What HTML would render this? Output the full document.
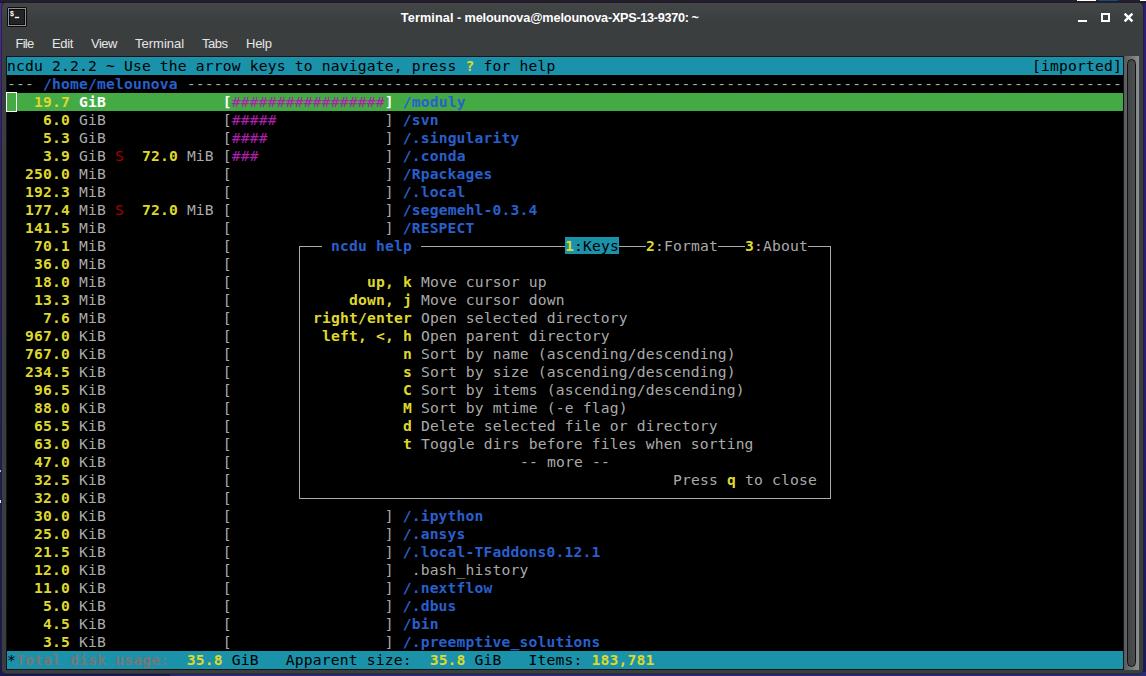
<!DOCTYPE html>
<html lang="en"><head><meta charset="utf-8"><title>Terminal - melounova@melounova-XPS-13-9370: ~</title>
<style>
html,body{margin:0;padding:0}
body{width:1146px;height:676px;overflow:hidden;background:#2d1b74;position:relative;font-family:"Liberation Sans",sans-serif}
#topstrip{position:absolute;left:0;top:0;width:1146px;height:3px;background:linear-gradient(#2a2036,#241d2e 40%,#19191c 80%)}
.ts{position:absolute;top:0;height:1px}
#frame{position:absolute;left:0;top:0;width:1146px;height:676px}
#win{position:absolute;left:2px;top:3px;width:1142px;height:671px}
#tbar{position:absolute;left:0;top:0;width:1141px;height:30px;background:linear-gradient(#444748,#3b3e3f 65%);border-radius:5px 5px 0 0}
#title{position:absolute;left:398.8px;width:400px;top:7px;text-align:left;color:#fff;font-weight:bold;font-size:12.7px;line-height:16px;letter-spacing:-0.15px;white-space:pre}
#icon{position:absolute;left:5px;top:4px;width:20px;height:20px}
.wb{position:absolute}
#menu{position:absolute;left:0;top:30px;height:24px;width:100%;color:#e6e6e6;font-size:13px;line-height:20px}
#menu span{position:absolute;top:1px}
#term{box-shadow:0 0 0 1px #14151c;position:absolute;left:5px;top:54px;width:1116px;height:612px;background:#000;color:#aaa;font-family:"DejaVu Sans Mono","Liberation Mono",monospace;font-size:14.67px;letter-spacing:0.168px;overflow:hidden}
.r{position:absolute;left:0;width:1116px;height:18px;line-height:18px;white-space:pre}
.d{position:absolute;height:18px;line-height:18px;white-space:pre;background:#000}
.hd{background:#1a92aa;color:#000}
.sel{background:#44aa44}
.by{color:#ded82c;font-weight:bold}
.bb{color:#295fcc;font-weight:bold}
.bw{color:#fff;font-weight:bold}
.bk{color:#777;font-weight:bold}
.mg{color:#aa22aa}
.rd{color:#aa0000}
.tab{background:#1a92aa;color:#000}
.tab.by{color:#ded82c}
#cursor{position:absolute;left:4px;top:89px;width:9px;height:18px;border:1px solid #fff}
#dlg{position:absolute;left:288px;top:180px;width:540px;height:270px;background:#000}
#dbox{position:absolute;left:4px;top:9px;width:530px;height:251px;border:1px solid #aaa}
.gap{position:absolute;top:0;height:18px;background:#000}
#sbar{position:absolute;left:1122px;top:53px;width:15px;height:614px;background:linear-gradient(90deg,#585b5c,#8e9192)}
#slider{position:absolute;left:3px;top:3px;width:7px;height:606px;border:1px solid #101111;border-radius:5px;background:linear-gradient(90deg,#434647,#4a4d4e)}
#lstrip{position:absolute;left:0;top:0;width:4px;height:676px;background:linear-gradient(#4b2a9c,#45289a 40px,#2e1c78 160px,#251a6c 60%,#17185a)}
#bstrip{position:absolute;left:0;top:672px;width:1146px;height:4px;background:linear-gradient(90deg,#131a5a 170px,#292a78 170px)}
#rstrip{position:absolute;left:1140px;top:0;width:6px;height:676px;background:linear-gradient(#2f1c78,#2c1b72 50%,#1a195e)}
.spk{position:absolute;left:0;width:1px;background:#e8e8f0}

</style></head><body>
<div id="lstrip"></div><div class="spk" style="top:470px;height:2px;opacity:.75"></div><div class="spk" style="top:500px;height:3px"></div><div id="rstrip"></div><div id="bstrip"></div>
<div id="topstrip"><div class="ts" style="left:1077px;width:19px;background:#fff"></div><div class="ts" style="left:1098px;width:20px;background:#1b4a82"></div><div class="ts" style="left:1140px;width:6px;background:#fff"></div></div>
<svg id="frame" viewBox="0 0 1146 676"><rect x="1.5" y="2.5" width="1142" height="671.5" rx="4.5" fill="#3b3e3f" stroke="#17181a" stroke-opacity="0.55" stroke-width="1"/></svg>
<div id="win">
 <div id="tbar">
  <svg id="icon" viewBox="0 0 20 20"><rect x="0" y="0" width="20" height="20" rx="2" fill="#0b0b0b"/><rect x="1.5" y="1.5" width="17" height="17" fill="#0b0b0b" stroke="#8e8e8e" stroke-width="1"/><rect x="3" y="3" width="14" height="14" fill="#242424"/><text x="2.9" y="9.4" font-family="Liberation Sans, sans-serif" font-weight="bold" font-size="7" fill="#fff">$</text><rect x="7.8" y="9.8" width="4.4" height="1.4" fill="#fff"/></svg>
  <div id="title"><span style="letter-spacing:0.12px">Terminal</span> - melounova@melounova<span style="letter-spacing:-0.3px">-XPS-13-9370</span><span style="letter-spacing:-0.5px">: ~</span></div>
  <svg class="wb" style="left:1076px;top:10px" width="10" height="10" viewBox="0 0 10 10"><rect x="0" y="7" width="9" height="2" fill="#fff"/></svg>
  <svg class="wb" style="left:1099px;top:10px" width="10" height="10" viewBox="0 0 10 10"><rect x="1" y="1" width="7" height="7" fill="none" stroke="#fff" stroke-width="2"/></svg>
  <svg class="wb" style="left:1122px;top:10px" width="10" height="10" viewBox="0 0 10 10"><path d="M0.6 0.6 L8.4 8.4 M8.4 0.6 L0.6 8.4" stroke="#fff" stroke-width="2.4"/></svg>
 </div>
 <div id="menu"><span style="left:13.4px;letter-spacing:-0.7px">File</span><span style="left:50px;letter-spacing:-0.35px">Edit</span><span style="left:89px;letter-spacing:-0.5px">View</span><span style="left:133px">Terminal</span><span style="left:200px;letter-spacing:-0.5px">Tabs</span><span style="left:244px;letter-spacing:-0.25px">Help</span></div>
 <div id="term">
<div class="r hd" style="top:0px">ncdu 2.2.2 ~ Use the arrow keys to navigate, press <span class="by">?</span> for help                                                     [imported]</div>
<div class="r " style="top:18px">--- <span class="bb">/home/melounova</span> --------------------------------------------------------------------------------------------------------</div>
<div class="r sel" style="top:36px">  <span class="by"> 19.7</span> <span class="bw">GiB</span>             <span class="bw">[</span><span class="mg">#################</span><span class="bw">]</span> <span class="bb">/moduly</span></div>
<div class="r " style="top:54px">  <span class="by">  6.0</span> GiB             [<span class="mg">#####</span>            ] <span class="bb">/svn</span></div>
<div class="r " style="top:72px">  <span class="by">  5.3</span> GiB             [<span class="mg">####</span>             ] <span class="bb">/.singularity</span></div>
<div class="r " style="top:90px">  <span class="by">  3.9</span> GiB <span class="rd">S</span> <span class="by"> 72.0</span> MiB [<span class="mg">###</span>              ] <span class="bb">/.conda</span></div>
<div class="r " style="top:108px">  <span class="by">250.0</span> MiB             [                 ] <span class="bb">/Rpackages</span></div>
<div class="r " style="top:126px">  <span class="by">192.3</span> MiB             [                 ] <span class="bb">/.local</span></div>
<div class="r " style="top:144px">  <span class="by">177.4</span> MiB <span class="rd">S</span> <span class="by"> 72.0</span> MiB [                 ] <span class="bb">/segemehl-0.3.4</span></div>
<div class="r " style="top:162px">  <span class="by">141.5</span> MiB             [                 ] <span class="bb">/RESPECT</span></div>
<div class="r " style="top:180px">  <span class="by"> 70.1</span> MiB             [</div>
<div class="r " style="top:198px">  <span class="by"> 36.0</span> MiB             [</div>
<div class="r " style="top:216px">  <span class="by"> 18.0</span> MiB             [</div>
<div class="r " style="top:234px">  <span class="by"> 13.3</span> MiB             [</div>
<div class="r " style="top:252px">  <span class="by">  7.6</span> MiB             [</div>
<div class="r " style="top:270px">  <span class="by">967.0</span> KiB             [</div>
<div class="r " style="top:288px">  <span class="by">767.0</span> KiB             [</div>
<div class="r " style="top:306px">  <span class="by">234.5</span> KiB             [</div>
<div class="r " style="top:324px">  <span class="by"> 96.5</span> KiB             [</div>
<div class="r " style="top:342px">  <span class="by"> 88.0</span> KiB             [</div>
<div class="r " style="top:360px">  <span class="by"> 65.5</span> KiB             [</div>
<div class="r " style="top:378px">  <span class="by"> 63.0</span> KiB             [</div>
<div class="r " style="top:396px">  <span class="by"> 47.0</span> KiB             [</div>
<div class="r " style="top:414px">  <span class="by"> 32.5</span> KiB             [</div>
<div class="r " style="top:432px">  <span class="by"> 32.0</span> KiB             [</div>
<div class="r " style="top:450px">  <span class="by"> 30.0</span> KiB             [                 ] <span class="bb">/.ipython</span></div>
<div class="r " style="top:468px">  <span class="by"> 25.0</span> KiB             [                 ] <span class="bb">/.ansys</span></div>
<div class="r " style="top:486px">  <span class="by"> 21.5</span> KiB             [                 ] <span class="bb">/.local-TFaddons0.12.1</span></div>
<div class="r " style="top:504px">  <span class="by"> 12.0</span> KiB             [                 ]  .bash_history</div>
<div class="r " style="top:522px">  <span class="by"> 11.0</span> KiB             [                 ] <span class="bb">/.nextflow</span></div>
<div class="r " style="top:540px">  <span class="by">  5.0</span> KiB             [                 ] <span class="bb">/.dbus</span></div>
<div class="r " style="top:558px">  <span class="by">  4.5</span> KiB             [                 ] <span class="bb">/bin</span></div>
<div class="r " style="top:576px">  <span class="by">  3.5</span> KiB             [                 ] <span class="bb">/.preemptive_solutions</span></div>
<div class="r hd" style="top:594px">*<span class="bk">Total disk usage:</span>  <span class="by">35.8</span> GiB   Apparent size:  <span class="by">35.8</span> GiB   Items: <span class="by">183,781</span></div>
  <div id="dlg">
   <div id="dbox"></div>
<div class="d" style="top:0px;left:27px"> <span class="bb">ncdu help</span> </div>
<div class="d" style="top:0px;left:270px"><span class="by tab">1</span><span class="tab">:Keys</span></div>
<div class="d" style="top:0px;left:351px"><span class="by">2</span>:Format</div>
<div class="d" style="top:0px;left:450px"><span class="by">3</span>:About</div>
<div class="d" style="top:36px;left:18px"><span class="by">      up, k</span> Move cursor up</div>
<div class="d" style="top:54px;left:18px"><span class="by">    down, j</span> Move cursor down</div>
<div class="d" style="top:72px;left:18px"><span class="by">right/enter</span> Open selected directory</div>
<div class="d" style="top:90px;left:18px"><span class="by"> left, &lt;, h</span> Open parent directory</div>
<div class="d" style="top:108px;left:18px"><span class="by">          n</span> Sort by name (ascending/descending)</div>
<div class="d" style="top:126px;left:18px"><span class="by">          s</span> Sort by size (ascending/descending)</div>
<div class="d" style="top:144px;left:18px"><span class="by">          C</span> Sort by items (ascending/descending)</div>
<div class="d" style="top:162px;left:18px"><span class="by">          M</span> Sort by mtime (-e flag)</div>
<div class="d" style="top:180px;left:18px"><span class="by">          d</span> Delete selected file or directory</div>
<div class="d" style="top:198px;left:18px"><span class="by">          t</span> Toggle dirs before files when sorting</div>
<div class="d" style="top:216px;left:225px">-- more --</div>
<div class="d" style="top:234px;left:378px">Press <span class="by">q</span> to close</div>
  </div>
 </div>
 <div id="cursor"></div>
 <div id="sbar"><div id="slider"></div></div>
</div>

</body></html>
